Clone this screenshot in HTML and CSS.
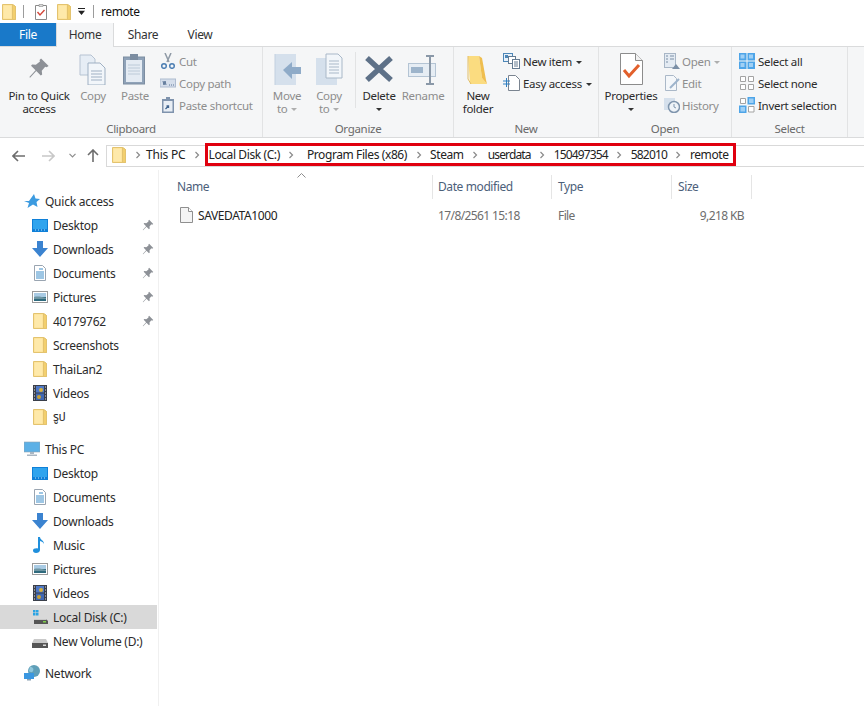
FILE: index.html
```html
<!DOCTYPE html>
<html lang="en">
<head>
    <meta charset="UTF-8">
    <title>remote</title>
    <link rel="stylesheet" href="styles.css">
</head>
<body>
    <svg class="defs" width="0" height="0">
        <symbol id="folder" viewBox="0 0 14 16">
            <path d="M.5 .5h10l3 2v13H.5z" fill="#fde08e" stroke="#e3c36f"/>
            <path d="M10.5 .5v15h3V2.500z" fill="#f3cf6d" stroke="#e3c36f"/>
            <path d="M1.500 1.500h8v13h-8z" fill="#fee9aa"/>
        </symbol>
        <symbol id="pin" viewBox="0 0 16 16">
            <path d="M9.500 1l5.500 5.500-1.500 1-1-.5-2.500 3 .3 2.700-1 .8L6 10.200 1.500 15 1 14.500 5.500 9.700 2.200 6.400l.8-1 2.700.3 3-2.500-.3-1z" fill="#8d9197"/>
        </symbol>
        <symbol id="desktop" viewBox="0 0 16 14">
            <rect width="16" height="13" y="1" fill="#0f80d8"/>
            <rect x="1" y="2" width="14" height="9" fill="#2fa4ee"/>
            <path d="M3 12h1M6 12h1M9 12h1M12 12h1" stroke="#bfe3fb"/>
        </symbol>
        <symbol id="download" viewBox="0 0 16 16">
            <path d="M5 0h6v7h5l-8 9-8-9h5z" fill="#3b83d0"/>
        </symbol>
        <symbol id="documents" viewBox="0 0 14 16">
            <path d="M1.500 .5h8l3 3v12h-11z" fill="#fff" stroke="#9aa5b1"/>
            <path d="M6 4h4M3 7h8M3 9h8M3 11h8M3 13h8" stroke="#3c8dc9"/>
        </symbol>
        <symbol id="pictures" viewBox="0 0 16 14">
            <rect x=".5" y="1.500" width="15" height="11" fill="#fff" stroke="#9a9a9a"/>
            <rect x="2" y="3" width="12" height="4" fill="#a9cbe4"/>
            <path d="M2 7h12v4H2z" fill="#2f6a7d"/>
            <path d="M2 7c4-1 8 0 12 1v1H2z" fill="#6f96a3"/>
        </symbol>
        <symbol id="videos" viewBox="0 0 14 16">
            <rect width="14" height="16" fill="#3a3f4a"/>
            <path d="M1 2h1M1 5h1M1 8h1M1 11h1M1 14h1M12 2h1M12 5h1M12 8h1M12 11h1M12 14h1" stroke="#e6e6e6"/>
            <rect x="3" y="1" width="8" height="6.500" fill="#4f79c7"/>
            <rect x="3" y="8.500" width="8" height="6.500" fill="#3f68b5"/>
            <circle cx="8" cy="5" r="2" fill="#d9b23a"/>
            <circle cx="6" cy="12" r="2" fill="#c9a233"/>
        </symbol>
        <symbol id="blank" viewBox="0 0 13 16">
            <path d="M.5 .5h8l4 4v11H.5z" fill="#f4f4f4" stroke="#8f8f8f"/>
            <path d="M8.500 .5v4h4" fill="#fff" stroke="#8f8f8f"/>
        </symbol>
        <symbol id="chev" viewBox="0 0 6 8">
            <path d="M1.500 1l3 3-3 3" fill="none" stroke="#8a8a8a" stroke-width="1.200"/>
        </symbol>
    </svg>

    <div class="titlebar">
        <svg class="ico-16 tb-first"><use href="#folder"/></svg>
        <span class="tb-div"></span>
        <svg class="tb-check" viewBox="0 0 12 16">
            <path d="M.5 1.500h11v14H.5z" fill="#fff" stroke="#8a8a8a"/>
            <path d="M4 .5h4v2H4z" fill="#ddd" stroke="#8a8a8a" stroke-width=".6"/>
            <path d="M2.500 8l2.500 3 4.500-5" fill="none" stroke="#d4473a" stroke-width="1.400"/>
        </svg>
        <svg class="ico-16 tb-folder2"><use href="#folder"/></svg>
        <svg class="tb-drop" viewBox="0 0 8 8"><path d="M0 0h8v1H0zM0 3h8L4 8z" fill="#222"/></svg>
        <span class="tb-div"></span>
        <span class="tb-title">remote</span>
    </div>

    <div class="tabs">
        <div class="tab tab-file">File</div>
        <div class="tab tab-on">Home</div>
        <div class="tab tab-share">Share</div>
        <div class="tab tab-view">View</div>
    </div>

    <div class="ribbon">
        <section class="group g-clipboard">
            <div class="tools">
                <div class="big w-pin">
                    <svg class="big-ico" viewBox="0 0 32 32"><use href="#pin" x="5" y="4" width="22" height="22"/></svg>
                    <span>Pin to Quick<br>access</span>
                </div>
                <div class="big w-copy off">
                    <svg class="big-ico" viewBox="0 0 32 32">
                        <path d="M3 2h11l4 4v16H3z" fill="#e6edf5" stroke="#b6c3d2"/>
                        <path d="M11 10h12l5 5v17H11z" fill="#f2f6fa" stroke="#9fb0c3"/>
                        <path d="M14 18h11M14 21h11M14 24h11M14 27h11" stroke="#9fb0c3"/>
                    </svg>
                    <span>Copy</span>
                </div>
                <div class="big w-paste off">
                    <svg class="big-ico" viewBox="0 0 32 32">
                        <rect x="4.500" y="4" width="21" height="27" fill="#8fa2b8" stroke="#7c8da1"/>
                        <rect x="7" y="7" width="16" height="22" fill="#e4ebf3"/>
                        <path d="M9 12h12M9 15h12M9 18h12M9 21h12" stroke="#bccad8"/>
                        <path d="M11 1h8v6h-8z" fill="#7c8da1"/>
                    </svg>
                    <span>Paste</span>
                </div>
                <div class="smalls s-clip off">
                    <div class="small">
                        <svg class="ico-16" viewBox="0 0 16 16"><path d="M5 0l4 9M11 0L7 9" stroke="#8f9aa6" stroke-width="1.500"/><circle cx="4" cy="13" r="2.300" fill="none" stroke="#4d7fb3" stroke-width="1.500"/><circle cx="12" cy="13" r="2.300" fill="none" stroke="#4d7fb3" stroke-width="1.500"/></svg>
                        <span>Cut</span>
                    </div>
                    <div class="small">
                        <svg class="ico-16" viewBox="0 0 16 16"><rect y="4" width="15.500" height="8" fill="#d5deeb" stroke="#aebbd0"/><path d="M3 6l1 4 1-4 1 4M9 10h1M11 10h1M13 10h1" fill="none" stroke="#5b7597"/></svg>
                        <span>Copy path</span>
                    </div>
                    <div class="small">
                        <svg class="ico-16" viewBox="0 0 16 16"><rect x="2" y="2" width="12" height="14" fill="#7f93ad"/><rect x="3.500" y="4" width="9" height="10.500" fill="#e8eef5"/><path d="M6 0h4v3H6z" fill="#7f93ad"/><path d="M5.500 12l3-3m-2 0h2v2" fill="none" stroke="#40648f" stroke-width="1.300"/></svg>
                        <span>Paste shortcut</span>
                    </div>
                </div>
            </div>
            <div class="group-name">Clipboard</div>
        </section>

        <section class="group g-organize">
            <div class="tools">
                <div class="big w-move off">
                    <svg class="big-ico" viewBox="0 0 32 32"><path d="M4 1h21v31H4z" fill="#d5e0ec"/><path d="M4 1l0 31" stroke="#c2d0df"/><path d="M12 17l9-8v5h9v7h-9v5z" fill="#8fabc8"/></svg>
                    <span>Move<br>to <i class="caret"></i></span>
                </div>
                <div class="big w-copyto off">
                    <svg class="big-ico" viewBox="0 0 32 32"><path d="M3 5h21v27H3z" fill="#d5e0ec"/><path d="M13 1h12l4 4v20H13z" fill="#f2f6fa" stroke="#a9b8c8"/><path d="M16 8h10M16 11h10M16 14h10M16 17h10M16 20h10" stroke="#a9b8c8"/></svg>
                    <span>Copy<br>to <i class="caret"></i></span>
                </div>
                <div class="vsep"></div>
                <div class="big w-delete">
                    <svg class="big-ico" viewBox="0 0 32 32"><path d="M4 5l24 22M28 5L4 27" stroke="#5e7188" stroke-width="5.500"/></svg>
                    <span class="dark">Delete<br><i class="caret dark-caret"></i></span>
                </div>
                <div class="big w-rename off">
                    <svg class="big-ico" viewBox="0 0 32 32"><rect x="1.500" y="10.500" width="27" height="13" fill="#e6edf4" stroke="#b4c4d4"/><rect x="4" y="14" width="12" height="6" fill="#9db4cb"/><path d="M19 3h8M19 31h8M23 3v28" stroke="#8a98a8" stroke-width="2"/></svg>
                    <span>Rename</span>
                </div>
            </div>
            <div class="group-name">Organize</div>
        </section>

        <section class="group g-new">
            <div class="tools">
                <div class="big w-newf">
                    <svg class="big-ico" viewBox="0 0 32 32"><path d="M6 3h11l3 22 5 6H8z" fill="#fbdc80"/><path d="M17 3l3 2 4 22 1 4-5-6z" fill="#efbe4f"/><path d="M6 3v23l3 5" fill="none" stroke="#e2be66"/></svg>
                    <span class="dark">New<br>folder</span>
                </div>
                <div class="smalls s-new">
                    <div class="small">
                        <svg class="ico-17" viewBox="0 0 17 16"><rect x=".5" y=".5" width="9" height="8" fill="#e8f1fa" stroke="#4d87b8"/><rect x="2" y="2" width="3" height="3" fill="#4d87b8"/><rect x="5.500" y="3.500" width="7" height="7" fill="#fff" stroke="#647a90"/><rect x="9.500" y="6.500" width="7" height="9" fill="#fff" stroke="#647a90"/><path d="M11 9h4M11 11h4M11 13h4" stroke="#647a90"/></svg>
                        <span class="dark">New item <i class="caret dark-caret"></i></span>
                    </div>
                    <div class="small">
                        <svg class="ico-17" viewBox="0 0 17 16"><path d="M5.500 .5h7l4 4v11h-11z" fill="#fff" stroke="#7a8490"/><path d="M0 6h7M0 9h7M3.500 3v9" stroke="#2f7fc1"/></svg>
                        <span class="dark">Easy access <i class="caret dark-caret"></i></span>
                    </div>
                </div>
            </div>
            <div class="group-name">New</div>
        </section>

        <section class="group g-open">
            <div class="tools">
                <div class="big w-props">
                    <svg class="big-ico" viewBox="0 0 32 32"><path d="M5.500 .5h15l7 7v24h-22z" fill="#fff" stroke="#8c8c8c"/><path d="M20.500 .5v7h7" fill="#f2f2f2" stroke="#8c8c8c"/><path d="M9 17l5 6 10-11" fill="none" stroke="#e2602c" stroke-width="3"/></svg>
                    <span class="dark">Properties<br><i class="caret dark-caret"></i></span>
                </div>
                <div class="smalls s-open off">
                    <div class="small">
                        <svg class="ico-16" viewBox="0 0 16 16"><rect x=".5" y=".5" width="11" height="14" fill="#e4ebf3" stroke="#a8b6c6"/><path d="M2 3h2M2 6h2M2 9h2M6 3h4M6 6h4" stroke="#7b8fa6"/><path d="M8 16l4-5 4 5z" fill="#7b8fa6"/></svg>
                        <span>Open <i class="caret"></i></span>
                    </div>
                    <div class="small">
                        <svg class="ico-16" viewBox="0 0 16 16"><path d="M1.500 .5h8l3 3v12h-11z" fill="#f4f7fa" stroke="#aab8c8"/><path d="M6 13l9-9" stroke="#9db4cb" stroke-width="2"/></svg>
                        <span>Edit</span>
                    </div>
                    <div class="small">
                        <svg class="ico-16" viewBox="0 0 16 16"><rect y="1" width="11" height="12" fill="#d5e0ec"/><circle cx="10" cy="10" r="5.500" fill="#eef3f8" stroke="#7f95ad" stroke-width="1.500"/><path d="M10 7v3l2 1" fill="none" stroke="#7f95ad"/></svg>
                        <span>History</span>
                    </div>
                </div>
            </div>
            <div class="group-name">Open</div>
        </section>

        <section class="group g-select">
            <div class="tools">
                <div class="smalls s-select">
                    <div class="small">
                        <svg class="ico-16" viewBox="0 0 16 16"><rect width="7.500" height="7.500" fill="#4ea5e8"/><rect x="8.500" width="7.500" height="7.500" fill="#4ea5e8"/><rect y="8.500" width="7.500" height="7.500" fill="#4ea5e8"/><rect x="8.500" y="8.500" width="7.500" height="7.500" fill="#4ea5e8"/><path d="M1.500 1.500h4v4h-4zM10 1.500h4v4h-4zM1.500 10h4v4h-4zM10 10h4v4h-4z" fill="#9fd0f5"/></svg>
                        <span class="dark">Select all</span>
                    </div>
                    <div class="small">
                        <svg class="ico-16" viewBox="0 0 16 16"><path d="M1.500 1.500h5v5h-5zM9.500 1.500h5v5h-5zM1.500 9.500h5v5h-5zM9.500 9.500h5v5h-5z" fill="#fff" stroke="#a3a3a3"/></svg>
                        <span class="dark">Select none</span>
                    </div>
                    <div class="small">
                        <svg class="ico-16" viewBox="0 0 16 16"><path d="M9.500 9.500H15V15H9.500z" fill="#fff" stroke="#a3a3a3"/><path d="M1.500 1.500h5v5h-5z" fill="#fff" stroke="#a3a3a3"/><rect x="8.500" width="7.500" height="7.500" fill="#4ea5e8"/><rect x="10" y="1.500" width="4.500" height="4.500" fill="#9fd0f5"/><rect y="8.500" width="7.500" height="7.500" fill="#4ea5e8"/><rect x="1.500" y="10" width="4.500" height="4.500" fill="#9fd0f5"/></svg>
                        <span class="dark">Invert selection</span>
                    </div>
                </div>
            </div>
            <div class="group-name">Select</div>
        </section>
    </div>

    <div class="navbar">
        <svg class="nav-btn nav-back" viewBox="0 0 13 12"><path d="M6 1L1 6l5 5M1 6h12" fill="none" stroke="#6d6d6d" stroke-width="1.600"/></svg>
        <svg class="nav-btn nav-fwd" viewBox="0 0 13 12"><path d="M7 1l5 5-5 5M12 6H0" fill="none" stroke="#c8c8c8" stroke-width="1.600"/></svg>
        <svg class="nav-btn nav-down" viewBox="0 0 7 5"><path d="M.5 .8L3.500 3.800 6.500 .8" fill="none" stroke="#8d8d8d" stroke-width="1.200"/></svg>
        <svg class="nav-btn nav-up" viewBox="0 0 12 13"><path d="M1 6l5-5 5 5M6 1v12" fill="none" stroke="#6d6d6d" stroke-width="1.600"/></svg>
        <div class="address">
            <svg class="ico-16 addr-folder"><use href="#folder"/></svg>
            <svg class="chev chev-first"><use href="#chev"/></svg>
            <span class="crumb crumb-pc">This PC</span>
            <svg class="chev chev-pc"><use href="#chev"/></svg>
            <div class="path-mark">
                <span class="crumb">Local Disk (C:)</span>
                <svg class="chev chev-wide"><use href="#chev"/></svg>
                <span class="crumb">Program Files (x86)</span>
                <svg class="chev"><use href="#chev"/></svg>
                <span class="crumb">Steam</span>
                <svg class="chev chev-steam"><use href="#chev"/></svg>
                <span class="crumb tight">userdata</span>
                <svg class="chev"><use href="#chev"/></svg>
                <span class="crumb tight">150497354</span>
                <svg class="chev"><use href="#chev"/></svg>
                <span class="crumb tight">582010</span>
                <svg class="chev"><use href="#chev"/></svg>
                <span class="crumb">remote</span>
            </div>
        </div>
    </div>

    <div class="main">
        <nav class="sidebar">
            <div class="row head qa-head">
                <svg class="ico-16" viewBox="0 0 16 16"><path d="M10 1l1.500 4.500L16 6l-3.500 3 1 5L9 11.500 3.500 15 5 10 0 8h5z" fill="#3c9be0"/></svg>
                <span>Quick access</span>
            </div>
            <div class="row"><svg class="ico-16"><use href="#desktop"/></svg><span>Desktop</span><svg class="pin"><use href="#pin"/></svg></div>
            <div class="row"><svg class="ico-16"><use href="#download"/></svg><span>Downloads</span><svg class="pin"><use href="#pin"/></svg></div>
            <div class="row"><svg class="ico-16"><use href="#documents"/></svg><span>Documents</span><svg class="pin"><use href="#pin"/></svg></div>
            <div class="row"><svg class="ico-16"><use href="#pictures"/></svg><span>Pictures</span><svg class="pin"><use href="#pin"/></svg></div>
            <div class="row"><svg class="ico-16"><use href="#folder"/></svg><span>40179762</span><svg class="pin"><use href="#pin"/></svg></div>
            <div class="row"><svg class="ico-16"><use href="#folder"/></svg><span>Screenshots</span></div>
            <div class="row"><svg class="ico-16"><use href="#folder"/></svg><span>ThaiLan2</span></div>
            <div class="row"><svg class="ico-16"><use href="#videos"/></svg><span>Videos</span></div>
            <div class="row"><svg class="ico-16"><use href="#folder"/></svg><span>รูป</span></div>

            <div class="row head pc-head">
                <svg class="ico-16" viewBox="0 0 16 16"><rect y="1" width="16" height="10" fill="#5cb0e6" stroke="#8fa3b3" stroke-width=".6"/><path d="M6 11h4v2H6zM3 13.500h10V15H3z" fill="#a9b6c2"/></svg>
                <span>This PC</span>
            </div>
            <div class="row"><svg class="ico-16"><use href="#desktop"/></svg><span>Desktop</span></div>
            <div class="row"><svg class="ico-16"><use href="#documents"/></svg><span>Documents</span></div>
            <div class="row"><svg class="ico-16"><use href="#download"/></svg><span>Downloads</span></div>
            <div class="row"><svg class="ico-16" viewBox="0 0 16 16"><path d="M6 0h2c0 3 4 3 4 7-1-2-2-2.500-4-3v9c0 2-2 3-4 3s-3-1-3-2.500S3 11 6 11.500z" fill="#1f8fdc"/></svg><span>Music</span></div>
            <div class="row"><svg class="ico-16"><use href="#pictures"/></svg><span>Pictures</span></div>
            <div class="row"><svg class="ico-16"><use href="#videos"/></svg><span>Videos</span></div>
            <div class="row selected">
                <svg class="ico-16" viewBox="0 0 16 16"><path d="M1 1h2.500v2.500H1zM4 1h2.500v2.500H4zM1 4h2.500v2.500H1zM4 4h2.500v2.500H4z" fill="#2aa3e3"/><path d="M2 10h12l2 2v3H2z" fill="#555"/><path d="M2 10h12l1 1H2z" fill="#c8c8c8"/><rect x="11" y="12" width="3" height="1.500" fill="#7ed04b"/></svg>
                <span>Local Disk (C:)</span>
            </div>
            <div class="row">
                <svg class="ico-16" viewBox="0 0 16 16"><path d="M2 6h12l2 4v5H0v-5z" fill="#c9c9c9"/><rect y="10" width="16" height="5" fill="#555"/><rect x="11" y="11.500" width="3" height="1.500" fill="#d9d9d9"/></svg>
                <span>New Volume (D:)</span>
            </div>

            <div class="row head net-head">
                <svg class="ico-16" viewBox="0 0 16 16"><circle cx="10" cy="6" r="6" fill="#5f9fb8"/><path d="M6 2c3 0 4 2 3 4s-3 1-4 0z" fill="#8fc7dc"/><rect y="8" width="10" height="6" fill="#3a97e0"/><path d="M3 14h4v1.500H3z" fill="#8aa0b2"/></svg>
                <span>Network</span>
            </div>
        </nav>

        <div class="files">
            <svg class="sort-arrow" viewBox="0 0 9 5"><path d="M.5 4.500l4-4 4 4" fill="none" stroke="#8d8d8d"/></svg>
            <div class="cols">
                <div class="col c-name">Name</div>
                <div class="col c-date">Date modified</div>
                <div class="col c-type">Type</div>
                <div class="col c-size">Size</div>
            </div>
            <div class="file-row">
                <div class="c-name cell-name"><svg class="ico-file"><use href="#blank"/></svg><span class="fname">SAVEDATA1000</span></div>
                <div class="c-date">17/8/2561 15:18</div>
                <div class="c-type">File</div>
                <div class="c-size num">9,218 KB</div>
            </div>
        </div>
    </div>
</body>
</html>
```

FILE: styles.css
```css
* {
    box-sizing: border-box;
}
html, body {
    margin: 0;
    height: 100%;
    overflow: hidden;
}
body {
    width: 864px;
    height: 706px;
    background: #fff;
    color: #2b2b2b;
    font-family: "Noto Sans", "Noto Sans Thai", "Liberation Sans", sans-serif;
    font-size: 12px;
    letter-spacing: -0.25px;
}
.defs {
    position: absolute;
}
svg {
    display: block;
    flex: none;
    overflow: hidden;
}
.ico-16 {
    width: 16px;
    height: 16px;
}
.ico-17 {
    width: 17px;
    height: 16px;
}

/* title bar */
.titlebar {
    height: 23px;
    display: flex;
    align-items: center;
}
.tb-first {
    margin-left: 1px;
}
.tb-div {
    width: 1px;
    height: 13px;
    background: #9c9c9c;
}
.tb-first + .tb-div {
    margin-left: 6px;
}
.tb-check {
    width: 12px;
    height: 16px;
    margin-left: 11px;
}
.tb-folder2 {
    margin-left: 9px;
}
.tb-drop {
    width: 7px;
    height: 7px;
    margin-left: 6px;
    margin-right: 8px;
}
.tb-title {
    margin-left: 7px;
    color: #111;
    letter-spacing: -0.4px;
}

/* tabs */
.tabs {
    height: 24px;
    display: flex;
    border-bottom: 1px solid #dadbdc;
    letter-spacing: -0.35px;
}
.tab {
    text-align: center;
    line-height: 23px;
    color: #333;
}
.tab-file {
    width: 56px;
    background: #1979c9;
    color: #fff;
}
.tab-on {
    width: 58px;
    height: 24px;
    background: #f5f6f7;
    border: 1px solid #dadbdc;
    border-bottom: none;
    border-top: none;
}
.tab-share {
    width: 58px;
}
.tab-view {
    width: 56px;
}

/* ribbon */
.ribbon {
    height: 91px;
    display: flex;
    background: #f5f6f7;
    border-bottom: 1px solid #dadbdc;
    padding-right: 16px;
    font-size: 11.5px;
    letter-spacing: -0.3px;
}
.group {
    display: flex;
    flex-direction: column;
    border-right: 1px solid #e2e3e4;
    color: #2b2b2b;
}
.tools {
    height: 75px;
    display: flex;
    padding-top: 5px;
}
.group-name {
    text-align: center;
    color: #6a6a6a;
    line-height: 14px;
}
.g-clipboard { width: 263px; }
.g-organize { width: 191px; }
.g-new { width: 145px; }
.g-open { width: 133px; }
.g-select { width: 116px; }

.big {
    display: flex;
    flex-direction: column;
    align-items: center;
    text-align: center;
    line-height: 13px;
}
.big-ico {
    width: 32px;
    height: 32px;
    margin-bottom: 4px;
    margin-top: 1px;
}
.off {
    color: #8d8d8d;
}
.dark {
    color: #2b2b2b;
}
.w-pin { width: 78px; }
.w-copy { width: 30px; }
.w-paste { width: 54px; margin-right: -2px; }
.w-move { width: 48px; }
.w-copyto { width: 36px; }
.w-delete { width: 46px; }
.w-rename { width: 42px; }
.w-newf { width: 48px; }
.w-props { width: 64px; }
.vsep {
    width: 1px;
    height: 56px;
    background: #e2e3e4;
    margin: 0 0 0 8px;
}
.smalls {
    display: flex;
    flex-direction: column;
    gap: 6px;
    margin-top: 1px;
}
.small {
    height: 16px;
    display: flex;
    align-items: center;
    gap: 3px;
    white-space: nowrap;
}
.s-new {
    margin-left: 1px;
}
.s-open {
    margin-left: 1px;
}
.s-open .small {
    gap: 2px;
}
.s-select {
    margin-left: 7px;
}
.caret {
    display: inline-block;
    width: 0;
    height: 0;
    vertical-align: middle;
    border: 3px solid transparent;
    border-top: 3px solid #aeaeae;
    border-bottom: none;
    margin-left: 1px;
}
.dark-caret {
    border-top-color: #333;
}

/* nav bar */
.navbar {
    height: 32px;
    display: flex;
    align-items: center;
    background: #fff;
    padding-top: 3px;
}
.nav-btn {
    flex: none;
}
.nav-back {
    width: 13px;
    height: 12px;
    margin-left: 12px;
}
.nav-fwd {
    width: 13px;
    height: 12px;
    margin-left: 17px;
}
.nav-down {
    width: 7px;
    height: 5px;
    margin-left: 14px;
}
.nav-up {
    width: 12px;
    height: 13px;
    margin-left: 11px;
}
.address {
    flex: 1;
    height: 22px;
    margin-left: 7px;
    border: 1px solid #d9d9d9;
    border-right: none;
    display: flex;
    align-items: center;
    padding: 0 0 2px 4px;
    letter-spacing: -0.4px;
}
.chev {
    width: 6px;
    height: 8px;
    margin: 0 8.500px;
}
.chev-first {
    margin-left: 8px;
    margin-right: 5px;
}
.chev-pc {
    margin: 0 7px 0 8px;
}
.chev-wide {
    margin-right: 12.500px;
}
.chev-steam {
    margin-right: 9.500px;
}
.crumb {
    color: #222;
    white-space: nowrap;
}
.crumb-pc {
    letter-spacing: -0.2px;
}
.tight {
    letter-spacing: -0.85px;
}
.path-mark {
    display: flex;
    align-items: center;
    height: 23px;
    margin-left: -2px;
    padding: 0 4px 0 1px;
    border: 3px solid #e0000f;
}

/* main */
.main {
    height: 536px;
    display: flex;
}
.sidebar {
    width: 159px;
    height: 536px;
    border-right: 1px solid #f0f0f0;
    padding-top: 19px;
}
.row {
    width: 157px;
    height: 24px;
    display: flex;
    align-items: center;
    padding-left: 32px;
    position: relative;
    color: #2b2b2b;
}
.row > span {
    margin-left: 5px;
}
.row .pin {
    width: 12px;
    height: 12px;
    position: absolute;
    left: 142px;
    top: 6px;
}
.row.head {
    padding-left: 24px;
}
.pc-head {
    margin-top: 8px;
}
.net-head {
    margin-top: 8px;
}
.selected {
    background: #d9d9d9;
}

/* file list */
.files {
    flex: 1;
    position: relative;
}
.sort-arrow {
    width: 9px;
    height: 5px;
    position: absolute;
    left: 138px;
    top: 3px;
}
.cols {
    height: 24px;
    margin-top: 5px;
    display: flex;
    color: #4c607a;
    letter-spacing: -0.4px;
}
.col {
    line-height: 24px;
    border-right: 1px solid #e5e5e5;
}
.c-name {
    width: 274px;
    padding-left: 18px;
}
.c-date {
    width: 119px;
    padding-left: 5px;
}
.c-type {
    width: 120px;
    padding-left: 6px;
}
.c-size {
    width: 80px;
    padding-left: 6px;
}
.file-row {
    height: 24px;
    margin-top: 4px;
    display: flex;
    align-items: center;
    color: #6d6d6d;
    letter-spacing: -0.6px;
}
.cell-name {
    display: flex;
    align-items: center;
    gap: 5px;
    color: #222;
    padding-left: 21px;
    letter-spacing: -0.4px;
}
.ico-file {
    width: 13px;
    height: 16px;
}
.num {
    text-align: right;
    padding-right: 8px;
}
```
